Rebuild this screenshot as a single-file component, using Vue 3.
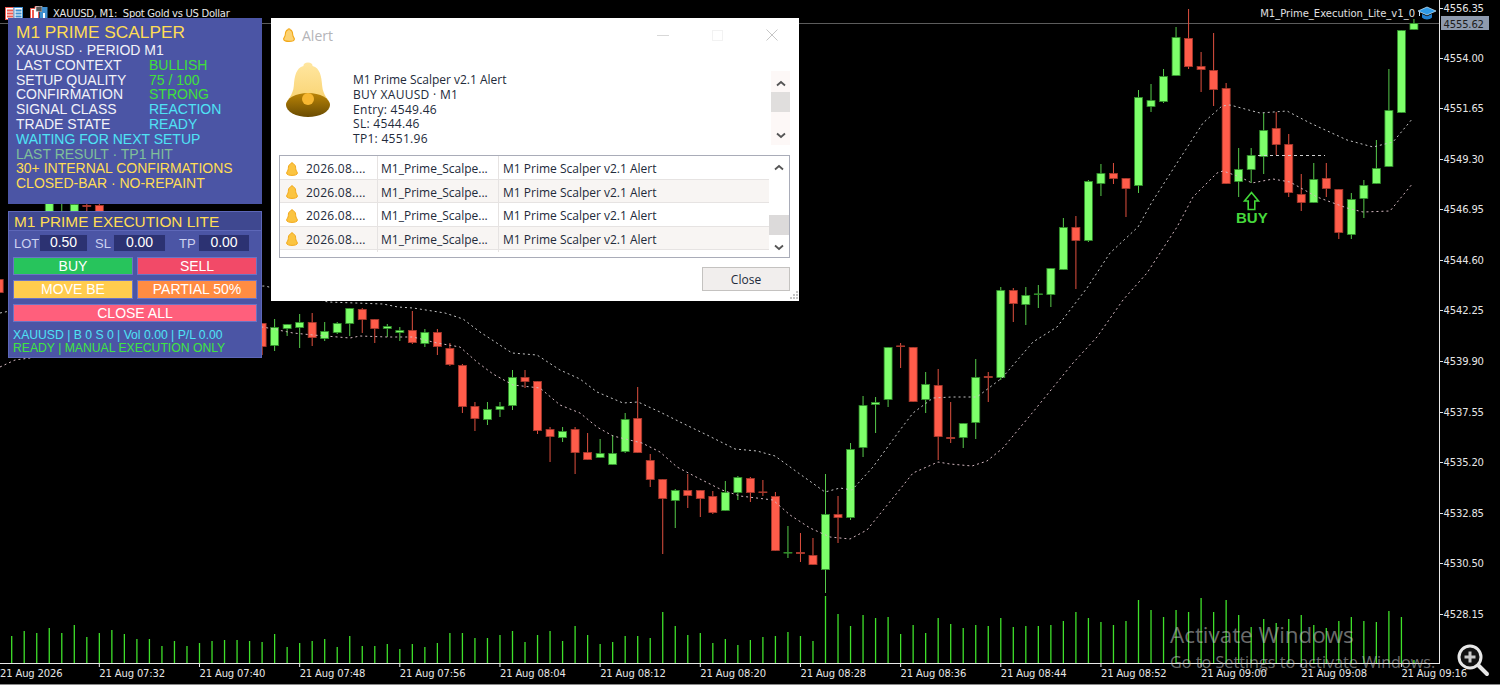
<template>
  <div class="terminal">
    <!-- chart canvas -->
    <svg class="chart" width="1500" height="685" viewBox="0 0 1500 685">
      <line x1="0" y1="23.5" x2="1439" y2="23.5" stroke="#5c5c5c" />

      <g v-for="bar in volumeBars" :key="'v' + bar.x">
        <line :x1="bar.x" :x2="bar.x" :y1="bar.top" y2="663" stroke="#3fe02a" stroke-width="1.3" />
      </g>

      <g v-for="c in candleList" :key="c.x">
        <line :x1="c.x" :x2="c.x" :y1="c.wickTop" :y2="c.wickBottom" :stroke="c.up ? '#56c94a' : '#e0503f'" />
        <rect :x="c.x - 4" :y="c.top" width="8" :height="c.height" :fill="c.up ? '#7dff6a' : '#ff5c4a'" :stroke="c.up ? '#2e8a28' : '#a5382c'" stroke-width="0.8" />
      </g>

      <polyline :points="upperBand" fill="none" stroke="#c4c4c4" stroke-width="1" stroke-dasharray="2 3" />
      <polyline :points="lowerBand" fill="none" stroke="#d4b8c0" stroke-width="1" stroke-dasharray="2 3" />
      <line x1="1258" y1="155.5" x2="1325" y2="155.5" stroke="#cfcfcf" stroke-dasharray="3 3" />

      <!-- buy marker -->
      <path d="M1251.5 192.5 L1258.5 201 H1254.8 V209.5 H1248.2 V201 H1244.5 Z" fill="none" stroke="#42d838" stroke-width="1.6" />
      <text x="1236" y="222.5" class="buy-mark">BUY</text>

      <!-- axes -->
      <line x1="1439.5" y1="0" x2="1439.5" y2="663" stroke="#e8e8e8" />
      <line x1="0" y1="663.5" x2="1440" y2="663.5" stroke="#e8e8e8" />
      <line x1="0" y1="684.5" x2="1500" y2="684.5" stroke="#8a8a8a" />

      <g v-for="p in priceLabels" :key="p.text">
        <line x1="1439" :y1="p.y" x2="1443" :y2="p.y" stroke="#e8e8e8" />
        <text x="1443.5" :y="p.y + 3.5" class="axis-text">{{ p.text }}</text>
      </g>

      <rect x="1441" y="16" width="48" height="14" fill="#8e9aae" />
      <text x="1443.5" y="27.5" class="axis-text price-tag">4555.62</text>

      <text x="0" y="677" class="axis-text">21 Aug 2026</text>
      <g v-for="t in timeLabels" :key="t.text">
        <line :x1="t.x" :x2="t.x" y1="663" y2="667" stroke="#e8e8e8" />
        <text :x="t.x" y="677" class="axis-text">21 Aug {{ t.text }}</text>
      </g>
    </svg>

    <!-- chart title row -->
    <div class="chart-title">
      <svg width="18" height="13" viewBox="0 0 18 13">
        <rect x="0.5" y="0.5" width="8.5" height="12" fill="#fff" stroke="#ef5a50" />
        <rect x="9" y="0.5" width="8.5" height="12" fill="#fff" stroke="#3f8fd0" />
        <path d="M2 3.5h6M2 6.5h6M2 9.5h6" stroke="#ef5a50" stroke-width="2" />
        <path d="M10.5 3.5h6M10.5 6.5h6M10.5 9.5h6" stroke="#3f8fd0" stroke-width="2" />
      </svg>
      <svg class="title-icon-two" width="18" height="14" viewBox="0 0 18 14">
        <path d="M0.5 2.5H5V0.5H8.5V13.5H0.5Z" fill="#fff" stroke="#ef5a50" />
        <rect x="2" y="4" width="2" height="8" fill="#ef5a50" />
        <rect x="6" y="0.5" width="6" height="5" fill="#555" stroke="#ddd" stroke-width="0.6" />
        <path d="M12 1H17.5V13.5H9.5V6H12Z" fill="#3f8fd0" />
        <rect x="13" y="7" width="2" height="6" fill="#fff" />
      </svg>
      <span class="title-text">XAUUSD, M1:&nbsp; Spot Gold vs US Dollar</span>
    </div>

    <div class="expert-name">
      <span>M1_Prime_Execution_Lite_v1_0</span>
      <svg width="18" height="15" viewBox="0 0 18 15">
        <path d="M9 1 L18 5 L9 9 L0 5 Z" fill="#2f9be8" stroke="#d6efff" stroke-width="0.7" />
        <path d="M4 8 V11.5 C6 14 12 14 14 11.5 V8 L9 10.3 Z" fill="#1f7fd0" />
        <path d="M1.5 5.5 V10" stroke="#cfe8ff" />
      </svg>
    </div>

    <!-- signal panel -->
    <section class="scalper-panel">
      <h1 class="scalper-title">M1 PRIME SCALPER</h1>
      <div class="row white">XAUUSD · PERIOD M1</div>
      <div v-for="s in stats" :key="s.label" class="stat-row">
        <span class="white">{{ s.label }}</span>
        <span :class="s.tone">{{ s.value }}</span>
      </div>
      <div class="row cyan">WAITING FOR NEXT SETUP</div>
      <div class="row muted">LAST RESULT · TP1 HIT</div>
      <div class="row gold">30+ INTERNAL CONFIRMATIONS</div>
      <div class="row gold">CLOSED-BAR · NO-REPAINT</div>
    </section>

    <!-- execution panel -->
    <section class="exec-panel">
      <header class="exec-head">M1 PRIME EXECUTION LITE</header>
      <div class="exec-body">
        <div class="exec-inputs">
          <label>LOT</label><span class="field lot">0.50</span>
          <label class="sl">SL</label><span class="field sl-field">0.00</span>
          <label class="tp">TP</label><span class="field tp-field">0.00</span>
        </div>
        <div class="exec-buttons">
          <button class="buy">BUY</button>
          <button class="sell">SELL</button>
          <button class="move">MOVE BE</button>
          <button class="partial">PARTIAL 50%</button>
          <button class="close-all">CLOSE ALL</button>
        </div>
        <div class="exec-status cyan">XAUUSD | B 0 S 0 | Vol 0.00 | P/L 0.00</div>
        <div class="exec-status lime">READY | MANUAL EXECUTION ONLY</div>
      </div>
    </section>

    <!-- alert dialog -->
    <div class="alert-window">
      <div class="alert-titlebar">
        <svg class="bell-small" width="12" height="14" viewBox="0 0 12 14">
          <path d="M6 .8C7 .8 7.2 1.6 7.2 1.9 9.4 2.5 9.6 4.6 9.7 6.6 9.8 8.8 11.4 10 11.4 11 11.4 12.8 8.6 13.4 6 13.4S.6 12.8.6 11C.6 10 2.2 8.8 2.3 6.6 2.4 4.6 2.6 2.5 4.8 1.9 4.8 1.6 5 .8 6 .8Z" fill="#fcd272" stroke="#f2a818" stroke-width="1.1" />
        </svg>
        <span class="alert-caption">Alert</span>
        <div class="win-controls">
          <svg width="12" height="12" viewBox="0 0 12 12"><path d="M0 6.5h12" stroke="#d8d8d8" /></svg>
          <svg width="11" height="11" viewBox="0 0 11 11"><rect x=".5" y=".5" width="10" height="10" fill="none" stroke="#f2f2f2" /></svg>
          <svg width="12" height="12" viewBox="0 0 12 12"><path d="M.5.5l11 11M11.5.5l-11 11" stroke="#c6c6c6" /></svg>
        </div>
      </div>

      <div class="alert-message">
        <svg class="bell-big" width="46" height="57" viewBox="0 0 46 57">
          <defs>
            <linearGradient id="bellTop" x1="0" y1="0" x2="0" y2="1">
              <stop offset="0" stop-color="#ffe6a0" />
              <stop offset="1" stop-color="#f9d26e" />
            </linearGradient>
            <linearGradient id="bellBase" x1="0" y1="0" x2="0" y2="1">
              <stop offset="0" stop-color="#ba8407" />
              <stop offset="1" stop-color="#6a4c02" />
            </linearGradient>
          </defs>
          <path d="M23 .5c3 0 4.5 1.5 4.6 3.4C35 6 36.5 14 37.2 24c.6 9 7 14 7.800 19H1C1.800 38 8.200 33 8.800 24 9.500 14 11 6 18.400 3.900 18.500 2 20 .5 23 .5Z" fill="url(#bellTop)" />
          <ellipse cx="23" cy="43" rx="22" ry="12" fill="url(#bellBase)" />
          <circle cx="23" cy="37" r="6" fill="#f7b731" />
        </svg>
        <div class="message-text">
          <div>M1 Prime Scalper v2.1 Alert</div>
          <div>BUY XAUUSD · M1</div>
          <div>Entry: 4549.46</div>
          <div>SL: 4544.46</div>
          <div>TP1: 4551.96</div>
        </div>
        <div class="scrollbar message-scroll">
          <svg class="arrow" width="12" height="7" viewBox="0 0 12 7"><path d="M2 5.5L6 2l4 3.5" fill="none" stroke="#555" stroke-width="1.8" /></svg>
          <div class="thumb"></div>
          <svg class="arrow down" width="12" height="7" viewBox="0 0 12 7"><path d="M2 1.5L6 5l4-3.5" fill="none" stroke="#555" stroke-width="1.8" /></svg>
        </div>
      </div>

      <div class="alert-list">
        <div class="list-rows">
          <div v-for="n in 4" :key="n" class="list-row">
            <div class="cell cell-time">
              <svg width="12" height="14" viewBox="0 0 12 14">
                <path d="M6 .8C7 .8 7.2 1.6 7.2 1.9 9.4 2.5 9.6 4.6 9.7 6.6 9.8 8.8 11.4 10 11.4 11 11.4 12.8 8.6 13.4 6 13.4S.6 12.8.6 11C.6 10 2.2 8.8 2.3 6.6 2.4 4.6 2.6 2.5 4.8 1.9 4.8 1.6 5 .8 6 .8Z" fill="#fbc441" stroke="#f2a818" />
              </svg>
              <span>2026.08....</span>
            </div>
            <div class="cell cell-name">M1_Prime_Scalpe...</div>
            <div class="cell cell-msg">M1 Prime Scalper v2.1 Alert</div>
          </div>
        </div>
        <div class="scrollbar list-scroll">
          <svg class="arrow" width="12" height="7" viewBox="0 0 12 7"><path d="M2 5.5L6 2l4 3.5" fill="none" stroke="#555" stroke-width="1.8" /></svg>
          <div class="thumb"></div>
          <svg class="arrow down" width="12" height="7" viewBox="0 0 12 7"><path d="M2 1.5L6 5l4-3.5" fill="none" stroke="#555" stroke-width="1.8" /></svg>
        </div>
      </div>

      <div class="alert-footer">
        <button class="close-btn">Close</button>
      </div>
      <svg class="grip" width="9" height="9" viewBox="0 0 9 9">
        <path d="M7 0h2v2H7zM4 3h2v2H4zM7 3h2v2H7zM1 6h2v2H1zM4 6h2v2H4zM7 6h2v2H7z" fill="#c4c4c4" />
      </svg>
    </div>

    <!-- watermark and zoom -->
    <div class="watermark">
      <div class="wm-big">Activate Windows</div>
      <div class="wm-small">Go to Settings to activate Windows.</div>
    </div>
    <svg class="zoom-icon" width="34" height="34" viewBox="0 0 34 34">
      <circle cx="14" cy="14" r="11" fill="#111" stroke="#e8e8e8" stroke-width="3" />
      <path d="M14 8.5v11M8.5 14h11" stroke="#c8c8c8" stroke-width="3" />
      <path d="M22.5 22.5L31 31" stroke="#e8e8e8" stroke-width="4" stroke-linecap="round" />
    </svg>
  </div>
</template>

<script setup>
import { computed } from 'vue'

const STEP = 12.52
const FIRST_X = 11.7

const xAt = (i) => FIRST_X + STEP * i

// [index, bodyTop, bodyBottom, wickTop, wickBottom, up]
const candles = [
  [-1, 279, 293, 275, 300, 0],
  [3, 190, 225, 190, 225, 1], [4, 190, 200, 190, 225, 1], [5, 204, 240, 200, 250, 1],
  [6, 205, 207, 195, 215, 0], [7, 205, 230, 200, 240, 0],
  [20, 323, 347, 323, 355, 0], [21, 327, 346, 319, 351, 1], [22, 324, 329, 324, 336, 1],
  [23, 322, 328, 314, 348, 1], [24, 322, 338, 313, 346, 0], [25, 331, 339, 322, 341, 1],
  [26, 323, 333, 322, 334, 1], [27, 308, 324, 308, 336, 1], [28, 309, 320, 308, 333, 0],
  [29, 319, 329, 319, 343, 0], [30, 326, 329, 324, 337, 1], [31, 330, 333, 327, 341, 1],
  [32, 330, 343, 311, 344, 0], [33, 332, 344, 329, 347, 1], [34, 332, 347, 329, 355, 0],
  [35, 348, 365, 343, 366, 0], [36, 365, 407, 364, 413, 0], [37, 406, 419, 402, 431, 0],
  [38, 409, 420, 402, 425, 1], [39, 406, 410, 402, 417, 1], [40, 377, 406, 370, 410, 1],
  [41, 377, 382, 370, 388, 0], [42, 381, 431, 381, 434, 0], [43, 429, 437, 427, 462, 0],
  [44, 431, 438, 427, 442, 1], [45, 429, 453, 427, 474, 0], [46, 452, 460, 433, 460, 0],
  [47, 453, 458, 439, 458, 1], [48, 453, 465, 435, 465, 1], [49, 419, 452, 413, 453, 1],
  [50, 418, 453, 387, 453, 0], [51, 460, 480, 454, 487, 0], [52, 479, 499, 479, 554, 0],
  [53, 490, 501, 489, 528, 1], [54, 490, 496, 474, 508, 0], [55, 490, 499, 490, 517, 0],
  [56, 496, 513, 491, 514, 0], [57, 492, 511, 481, 511, 1], [58, 477, 493, 476, 500, 1],
  [59, 478, 493, 477, 502, 0], [60, 491.5, 493, 480, 496, 0], [61, 496, 551, 492, 551, 0],
  [62, 552, 553.5, 526, 558, 1], [63, 552, 554, 533, 562, 0], [64, 555, 565, 538, 565, 0],
  [65, 514, 570, 474, 593, 1], [66, 514, 518, 496, 543, 0], [67, 449, 518, 443, 520, 1],
  [68, 405, 448, 396, 457, 1], [69, 402, 405, 397, 433, 1], [70, 347, 400, 347, 407, 1],
  [71, 345.5, 347, 343, 368, 0], [72, 347, 402, 347, 402, 0], [73, 384, 400, 372, 413, 1],
  [74, 385, 437, 369, 460, 0], [75, 437, 439, 402, 443, 0], [76, 423, 438, 423, 448, 1],
  [77, 377, 423, 359, 439, 1], [78, 376, 378, 372, 402, 0], [79, 290, 378, 287, 380, 1],
  [80, 290, 304, 288, 322, 0], [81, 295, 305, 287, 325, 1], [82, 293.5, 295, 285, 308, 1],
  [83, 268, 295, 268, 307, 1], [84, 227, 270, 218, 270, 1], [85, 227, 241, 216, 289, 0],
  [86, 181, 241, 180, 242, 1], [87, 173, 184, 164, 196, 1], [88, 173, 179, 163, 184, 0],
  [89, 178, 189, 178, 217, 0], [90, 97, 186, 90, 193, 1], [91, 100, 107, 84, 112, 1],
  [92, 76, 102, 69, 103, 1], [93, 37, 76, 27, 76, 1], [94, 38, 67, 9, 69, 0],
  [95, 66, 70, 52, 92, 0], [96, 70, 90, 33, 106, 0], [97, 88, 184, 83, 184, 0],
  [98, 169, 182, 148, 197, 1], [99, 155, 170, 148, 183, 1], [100, 130, 157, 113, 174, 1],
  [101, 128, 145, 112, 155, 0], [102, 144, 193, 134, 197, 0], [103, 194, 203, 174, 211, 0],
  [104, 179, 203, 163, 203, 1], [105, 178, 189, 163, 197, 0], [106, 189, 233, 189, 239, 0],
  [107, 199, 235, 193, 239, 1], [108, 185, 199, 180, 218, 1], [109, 168, 184, 140, 184, 1],
  [110, 110, 167, 69, 167, 1], [111, 30, 113, 30, 113, 1], [112, 23, 30, 19, 30, 1]
]

const candleList = computed(() =>
  candles.map(([i, top, bottom, wickTop, wickBottom, up]) => ({
    x: xAt(i),
    top: top + 0.4,
    height: bottom - top - 0.8,
    wickTop,
    wickBottom,
    up: up === 1
  }))
)

// top of each volume bar, the base is the time axis
const volumeTops = [
  636, 631, 633, 628, 633, 625, 637, 633, 630, 634, 639, 639, 646, 641, 646, 643, 641, 640, 640, 641,
  642, 634, 647, 643, 641, 639, 647, 636, 646, 646, 644, 649, 644, 647, 643, 633, 633, 638, 638, 635,
  631, 642, 635, 631, 641, 626, 635, 644, 642, 636, 636, 638, 612, 626, 635, 633, 643, 639, 645, 640,
  637, 636, 632, 636, 641, 596, 614, 626, 615, 618, 617, 634, 625, 633, 618, 624, 628, 625, 626, 618,
  627, 626, 626, 625, 621, 612, 618, 622, 625, 621, 600, 610, 617, 610, 612, 598, 612, 600, 615, 627,
  619, 623, 619, 615, 625, 628, 621, 617, 621, 622, 611, 617, 660
]

const volumeBars = computed(() =>
  volumeTops.map((top, i) => ({ x: xAt(i), top }))
)

const toPoints = (pts) => pts.map((p) => p.join(',')).join(' ')

const upperBand = toPoints([
  [0, 313], [15, 310], [100, 290], [265, 286], [328, 302], [383, 304], [398, 307], [413, 308], [445, 313],
  [463, 319], [480, 332], [512, 353], [537, 355], [560, 370], [580, 379], [597, 392], [623, 403], [638, 402],
  [660, 412], [680, 422], [707, 435], [735, 449], [757, 451], [775, 456], [797, 472], [825, 492], [840, 488],
  [852, 490], [873, 467], [900, 430], [913, 413], [933, 398], [952, 397], [977, 397], [1002, 378], [1033, 342],
  [1057, 327], [1087, 288], [1110, 253], [1138, 227], [1152, 202], [1177, 163], [1203, 123], [1222, 106],
  [1230, 105], [1260, 113], [1287, 111], [1310, 123], [1347, 140], [1373, 147], [1393, 142], [1413, 118]
])

const lowerBand = toPoints([
  [0, 367], [15, 360], [263, 327], [293, 333], [313, 335], [350, 338], [360, 336], [387, 337], [413, 337],
  [437, 343], [460, 347], [477, 362], [493, 374], [513, 385], [540, 388], [560, 405], [580, 413], [597, 427],
  [613, 436], [642, 443], [660, 452], [677, 467], [698, 478], [722, 490], [740, 496], [773, 500], [790, 515],
  [810, 528], [830, 537], [850, 539], [867, 530], [897, 493], [913, 473], [938, 462], [950, 464], [972, 466],
  [987, 461], [1003, 448], [1033, 412], [1073, 363], [1097, 337], [1123, 300], [1147, 273], [1177, 227],
  [1193, 197], [1217, 173], [1223, 171], [1240, 177], [1252, 183], [1273, 179], [1290, 182], [1317, 197],
  [1347, 208], [1363, 212], [1390, 211], [1413, 183]
])

const priceLabels = [
  ['4556.35', 8], ['4554.00', 58], ['4551.65', 108.5], ['4549.30', 159], ['4546.95', 209.5],
  ['4544.60', 260], ['4542.25', 310.5], ['4539.90', 361], ['4537.55', 412], ['4535.20', 462],
  ['4532.85', 513], ['4530.50', 563], ['4528.15', 614]
].map(([text, y]) => ({ text, y: Math.floor(y) + 0.5 }))

const timeLabels = ['07:32', '07:40', '07:48', '07:56', '08:04', '08:12', '08:20', '08:28', '08:36', '08:44', '08:52', '09:00', '09:08', '09:16']
  .map((text, k) => ({ text, x: xAt(7 + 8 * k) }))

const stats = [
  { label: 'LAST CONTEXT', value: 'BULLISH', tone: 'green' },
  { label: 'SETUP QUALITY', value: '75 / 100', tone: 'green' },
  { label: 'CONFIRMATION', value: 'STRONG', tone: 'green' },
  { label: 'SIGNAL CLASS', value: 'REACTION', tone: 'cyan' },
  { label: 'TRADE STATE', value: 'READY', tone: 'cyan' }
]
</script>

<style scoped>
.terminal {
  position: relative;
  width: 1500px;
  height: 685px;
  overflow: hidden;
  background: #000;
  font-family: "Liberation Sans", Arial, sans-serif;
}

.chart {
  position: absolute;
  left: 0;
  top: 0;
}

.axis-text {
  font-family: "DejaVu Sans", sans-serif;
  font-size: 10px;
  letter-spacing: -0.15px;
  fill: #e6e6e6;
}

.price-tag {
  fill: #1c1c1c;
}

.buy-mark {
  font-family: "Liberation Sans", sans-serif;
  font-weight: 700;
  font-size: 15px;
  fill: #46d83c;
}

.chart-title {
  position: absolute;
  left: 5px;
  top: 4px;
  display: flex;
  align-items: center;
  height: 18px;
}

.title-icon-two {
  margin-left: 7px;
}

.title-text {
  margin-left: 5px;
  padding-top: 1px;
  font-family: "DejaVu Sans", sans-serif;
  font-size: 10px;
  letter-spacing: -0.28px;
  color: #e8e8e8;
  white-space: nowrap;
}

.expert-name {
  position: absolute;
  right: 64px;
  top: 4px;
  display: flex;
  align-items: center;
  gap: 3px;
  height: 18px;
  font-family: "DejaVu Sans", sans-serif;
  font-size: 10px;
  color: #e0e0e0;
}

/* signal panel */
.scalper-panel {
  position: absolute;
  left: 8px;
  top: 18px;
  width: 254px;
  height: 186px;
  box-sizing: border-box;
  padding: 6px 8px 0;
  background: #4b55a5;
  font-size: 14px;
  line-height: 14.8px;
}

.scalper-title {
  margin: 0 0 2px;
  font-size: 17.3px;
  font-weight: 400;
  line-height: 17px;
  color: #ffdd55;
}

.stat-row {
  display: grid;
  grid-template-columns: 133px 1fr;
}

.white { color: #f2f2f8; }
.green { color: #3fe03a; }
.cyan { color: #4fe3f5; }
.muted { color: #7fc09a; }
.gold { color: #ffdd55; }
.lime { color: #3fe63f; }

/* execution panel */
.exec-panel {
  position: absolute;
  left: 8px;
  top: 211px;
  width: 254px;
  height: 147px;
  box-sizing: border-box;
  border: 1px solid #5d67b8;
  background: #4b55a5;
  color: #fff;
}

.exec-head {
  height: 18px;
  padding-left: 5px;
  background: #3f4890;
  border-bottom: 1px solid #5d67b8;
  font-size: 15.4px;
  line-height: 20px;
  color: #ffdd55;
}

.exec-body {
  padding: 3px 4px 0;
}

.exec-inputs {
  display: flex;
  align-items: center;
  height: 18px;
  font-size: 13px;
  color: #cdd2f0;
}

.exec-inputs label {
  width: 26px;
  padding-left: 1px;
  box-sizing: border-box;
}

.exec-inputs .sl {
  width: 19px;
  margin-left: 6px;
}

.exec-inputs .tp {
  width: 20px;
  margin-left: 12px;
}

.field {
  height: 18px;
  box-sizing: border-box;
  border: 1px solid #4a54a4;
  background: #2c3272;
  color: #fff;
  text-align: center;
  font-size: 14px;
  line-height: 15px;
}

.lot { width: 49px; }
.sl-field { width: 53px; }
.tp-field { width: 52px; }

.exec-buttons {
  display: grid;
  grid-template-columns: 120px 120px;
  column-gap: 4px;
  row-gap: 5px;
  margin-top: 4.5px;
}

.exec-buttons button {
  height: 18.5px;
  padding: 0;
  border: 1px solid #6b74c4;
  color: #fff;
  font-family: "Liberation Sans", Arial, sans-serif;
  font-size: 14px;
  line-height: 16px;
}

.buy { background: #27c45c; }
.sell { background: #f24a68; }
.move { background: #ffcc4d; }
.partial { background: #ff8c42; }
.exec-buttons .close-all {
  grid-column: 1 / 3;
  background: #ff5f7c;
}

.exec-status {
  font-size: 12.2px;
  line-height: 13px;
}

.exec-status.cyan {
  margin-top: 6.5px;
}

/* alert dialog */
.alert-window {
  position: absolute;
  left: 271px;
  top: 18px;
  width: 528px;
  height: 283px;
  background: #fff;
  font-family: "Open Sans", "Noto Sans", sans-serif;
  font-size: 12px;
  color: #222a3a;
}

.alert-titlebar {
  display: flex;
  align-items: center;
  height: 34px;
  padding-left: 12px;
}

.alert-caption {
  margin-left: 7px;
  font-size: 14px;
  color: #b4b4b8;
}

.win-controls {
  margin-left: auto;
  display: flex;
  align-items: center;
  gap: 43px;
  padding-right: 21px;
}

.alert-message {
  position: relative;
  display: flex;
  height: 103px;
  padding: 0 9px 0 14px;
}

.bell-big {
  margin-top: 10px;
}

.message-text {
  flex: 1;
  padding: 21px 0 0 22px;
  line-height: 14.8px;
}

.message-text div + div {
  letter-spacing: 0.3px;
}

.scrollbar {
  display: flex;
  flex-direction: column;
  align-items: center;
  background: #fdf8f7;
}

.arrow {
  margin-top: 9px;
}

.arrow.down {
  margin-top: auto;
  margin-bottom: 6px;
}

.thumb {
  width: 100%;
  height: 20px;
  background: #e0dedd;
}

.message-scroll {
  width: 19px;
  height: 74px;
  margin-top: 19px;
}

.message-scroll .thumb {
  margin-top: 5px;
}

.alert-list {
  display: flex;
  width: 511px;
  height: 103px;
  box-sizing: border-box;
  margin: 0 0 0 8px;
  border: 1px solid #a9acb8;
}

.list-rows {
  width: 489px;
}

.list-row {
  display: grid;
  grid-template-columns: 98px 121px 1fr;
  height: 23.6px;
  border-bottom: 1px solid #e6e3e2;
  box-sizing: border-box;
  line-height: 25px;
}

.list-row:nth-child(even) {
  background: #f8f5f3;
}

.cell {
  white-space: nowrap;
  border-right: 1px solid #e6e3e2;
  box-sizing: border-box;
}

.cell-time {
  display: flex;
  align-items: center;
  padding-left: 6px;
}

.cell-time span {
  margin-left: 8px;
  letter-spacing: 0.25px;
}

.cell-name {
  padding-left: 3px;
}

.cell-msg {
  padding-left: 4px;
  border-right: 0;
}

.list-scroll {
  flex: 1;
  background: #fff;
}

.list-scroll .thumb {
  margin-top: 44px;
  background: #dcdada;
}

.list-scroll .arrow {
  margin-top: 8px;
}

.list-scroll .arrow.down {
  margin-top: auto;
  margin-bottom: 6px;
}

.alert-footer {
  display: flex;
  justify-content: flex-end;
  padding: 9px 9px 0 0;
}

.close-btn {
  width: 88px;
  height: 24px;
  padding: 0;
  border: 1px solid #c4c2c0;
  background: #f1eeed;
  font-family: "Open Sans", "Noto Sans", sans-serif;
  font-size: 12px;
  color: #222a3a;
}

.grip {
  position: absolute;
  right: 1px;
  bottom: 1px;
}

.watermark {
  position: absolute;
  left: 1170px;
  top: 620px;
  color: rgba(200, 200, 200, 0.55);
  font-family: "Open Sans", "Noto Sans", sans-serif;
  white-space: nowrap;
}

.wm-big {
  font-size: 22.4px;
  line-height: 30px;
}

.wm-small {
  font-size: 16.2px;
  line-height: 20px;
  margin-top: 2px;
}

.zoom-icon {
  position: absolute;
  left: 1456px;
  top: 643px;
}
</style>
